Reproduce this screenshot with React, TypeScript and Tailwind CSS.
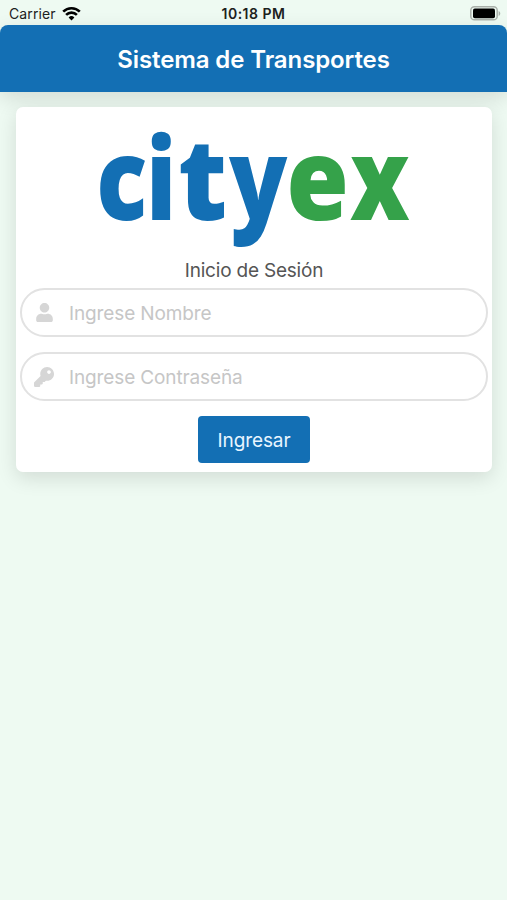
import React, { useState } from "react";
import { FaKey, FaUser } from "react-icons/fa";

const FIELDS = [
  {
    name: "nombre",
    type: "text",
    placeholder: "Ingrese Nombre",
    Icon: FaUser,
    iconSize: 19,
  },
  {
    name: "contrasena",
    type: "password",
    placeholder: "Ingrese Contraseña",
    Icon: FaKey,
    iconSize: 20,
  },
];

const LOGO_LETTERS = [
  { letter: "c", x: 2.2, scale: 0.83, color: "#136fb4" },
  { letter: "i", x: 52, scale: 0.82, color: "#136fb4" },
  { letter: "t", x: 84, scale: 0.94, color: "#136fb4" },
  { letter: "y", x: 135, scale: 0.84, color: "#136fb4" },
  { letter: "e", x: 192.3, scale: 0.89, color: "#35a24a" },
  { letter: "x", x: 256, scale: 0.83, color: "#35a24a" },
];

function StatusBar() {
  return (
    <div className="grid h-[25px] grid-cols-3 items-center pt-[2px] text-[#1c211d]">
      <div className="flex items-center gap-[6px] pl-[9px] text-[14px] tracking-[0.1px]">
        Carrier
        <svg width="19" height="15" viewBox="0 0 19 15" fill="none" stroke="#000" strokeWidth="2.6">
          <path d="M1.2 5.6a11.8 11.8 0 0 1 16.6 0" />
          <path d="M4.1 8.9a7.6 7.6 0 0 1 10.8 0" />
          <path d="M9.5 14.4l-2.9-3a4.1 4.1 0 0 1 5.8 0z" fill="#000" stroke="none" />
        </svg>
      </div>
      <div className="text-center text-[14px] font-semibold tracking-[0.5px]">
        10:18 PM
      </div>
      <svg
        className="mr-[6px] justify-self-end"
        width="31"
        height="15"
        viewBox="0 0 31 15"
      >
        <rect x="0.8" y="0.8" width="26.4" height="13" rx="3.6" fill="none" stroke="#a9b0aa" strokeWidth="1.5" />
        <rect x="3" y="2.6" width="22" height="9.6" rx="1.8" fill="#000" />
        <path d="M28.6 5v5c2.2-.8 2.2-4.2 0-5z" fill="#a9b0aa" />
      </svg>
    </div>
  );
}

function Logo() {
  return (
    <svg
      className="mx-auto block overflow-visible"
      width="320"
      height="130"
      viewBox="0 0 320 130"
      fontFamily="'Open Sans', 'Noto Sans', sans-serif"
      fontSize="114"
      fontWeight="800"
    >
      {LOGO_LETTERS.map(({ letter, x, scale, color }) => (
        <text
          key={letter}
          transform={`translate(${x} 100) scale(${scale} 1)`}
          fill={color}
        >
          {letter}
        </text>
      ))}
    </svg>
  );
}

export default function App() {
  const [form, setForm] = useState<Record<string, string>>({});

  const handleChange = (e: React.ChangeEvent<HTMLInputElement>) => {
    setForm({ ...form, [e.target.name]: e.target.value });
  };

  return (
    <div className="min-h-screen bg-[#eefaf2] font-['Inter','Liberation_Sans',sans-serif]">
      <StatusBar />
      <header className="flex h-[67px] items-center justify-center rounded-t-[8px] bg-[#136fb4] pt-[2px] text-white shadow-[0_6px_20px_rgba(0,0,0,0.12)]">
        <h1 className="text-[24px] font-semibold tracking-[-0.1px]">
          Sistema de Transportes
        </h1>
      </header>
      <form
        onSubmit={(e) => e.preventDefault()}
        className="relative mt-[15px] mr-[15px] ml-4 flex h-[365px] flex-col rounded-[7px] bg-white px-1 pt-[13px] shadow-[0_6px_20px_rgba(0,0,0,0.12)]"
      >
        <Logo />
        <h2 className="mt-[5px] h-[33px] text-center text-[19px] leading-[32px] tracking-[-0.2px] text-[#555]">
          Inicio de Sesión
        </h2>
        <div className="flex flex-col gap-[15px]">
          {FIELDS.map(({ name, type, placeholder, Icon, iconSize }) => (
            <label
              key={name}
              className="flex h-[49px] items-center rounded-full border-2 border-[#e2e2e2] pl-[12px]"
            >
              <span className="flex w-5 shrink-0 justify-center text-[#d6d6d6]">
                <Icon size={iconSize} />
              </span>
              <input
                type={type}
                name={name}
                value={form[name] ?? ""}
                onChange={handleChange}
                placeholder={placeholder}
                className="ml-[15px] w-full bg-transparent pt-[3px] text-[19px] tracking-[-0.13px] outline-none placeholder:text-[#c6c6c6]"
              />
            </label>
          ))}
        </div>
        <button
          type="submit"
          className="mx-auto mt-[15px] h-[47px] w-[112px] rounded-[4px] bg-[#136fb4] pt-[3px] text-[19px] tracking-[-0.1px] text-[#e8f5ff]"
        >
          Ingresar
        </button>
      </form>
    </div>
  );
}
